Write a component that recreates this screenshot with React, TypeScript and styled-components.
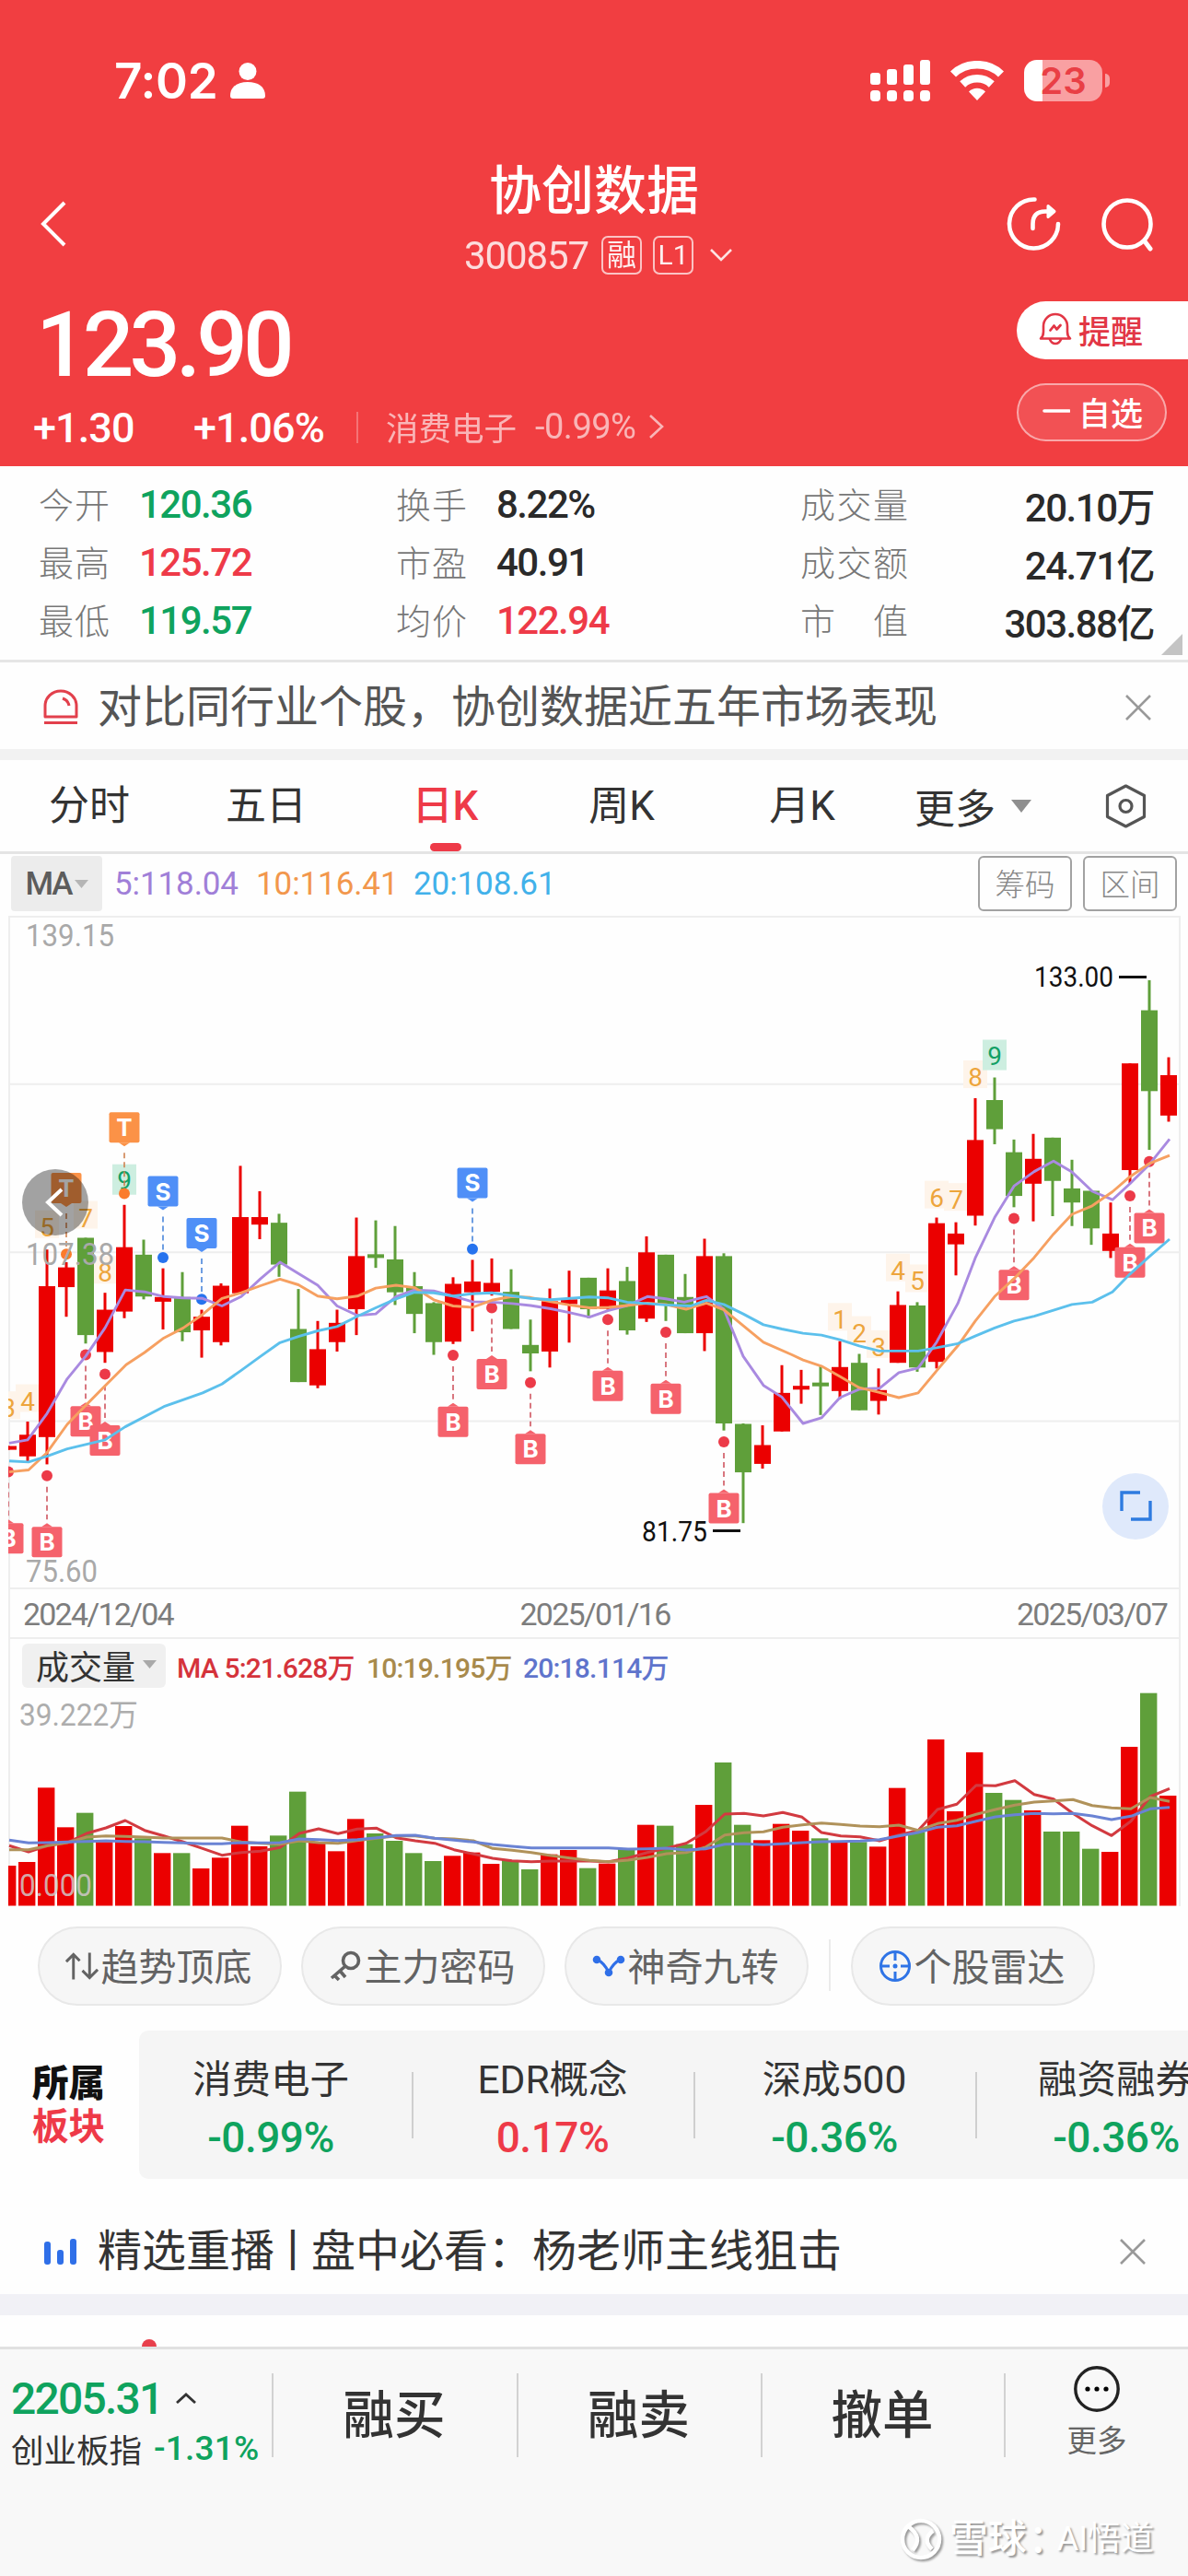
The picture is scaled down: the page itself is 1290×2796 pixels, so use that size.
import React from "react";
import styled, { createGlobalStyle, css } from "styled-components";

const GREEN = "#0fa35e";
const RED = "#ee3a48";
const UP = "#eb0000";
const DOWN = "#5f9f3a";
const FONT = `Roboto, "Noto Sans CJK SC", sans-serif`;

const Global = createGlobalStyle`
  * { box-sizing: border-box; }
  html, body { margin: 0; padding: 0; background: #fdfdfd; }
  body { font-family: ${FONT}; color: #2b2b2b; width: 1290px; overflow-x: hidden; }
  svg { display: block; flex: none; }
`;

const Page = styled.main`
  width: 1290px;
  height: 2796px;
  display: flex;
  flex-direction: column;
  overflow: hidden;
  background: #fefefe;
  white-space: nowrap;
`;

/* ---------- header ---------- */

const Header = styled.header`
  height: 506px;
  flex: none;
  background: #f13e41;
  color: #fff;
`;

const StatusBar = styled.div`
  height: 174px;
  display: flex;
  align-items: center;
  padding: 0 85px 0 124px;
`;

const Clock = styled.span`
  font: 600 53px/60px Inter, sans-serif;
  letter-spacing: -0.3px;
  padding-top: 2px;
  width: 126px;
`;

const StatusIcons = styled.div`
  margin-left: auto;
  display: flex;
  align-items: center;
  gap: 22px;
`;

const Battery = styled.div`
  display: flex;
  align-items: center;
  gap: 3px;
`;

const BatteryBody = styled.div`
  width: 85px;
  height: 45px;
  border-radius: 14px;
  background: linear-gradient(90deg, #fff 20px, #f9a0a2 20px);
  font: 600 40px/45px Inter, sans-serif;
  text-align: center;
  color: #e93f45;
`;

const BatteryNub = styled.i`
  width: 5px;
  height: 15px;
  border-radius: 0 5px 5px 0;
  background: #f9a0a2;
`;

const NavBar = styled.div`
  height: 138px;
  display: grid;
  grid-template-columns: 1fr 300px 1fr;
  align-items: center;
  padding: 0 36px 0 42px;
`;

const TitleBlock = styled.div`
  height: 138px;
  display: flex;
  flex-direction: column;
  align-items: center;
`;

const Title = styled.h1`
  margin: 0 0 3px -6px;
  font-weight: 500;
  font-size: 57px;
  line-height: 68px;
`;

const CodeRow = styled.div`
  display: flex;
  align-items: center;
  height: 64px;
  padding-left: 4px;
`;

const Code = styled.span`
  font-size: 42px;
  letter-spacing: -1.1px;
  opacity: 0.82;
  margin-right: 14px;
`;

const Tag = styled.span<{ $size: number }>`
  display: flex;
  align-items: center;
  justify-content: center;
  width: 44px;
  height: 42px;
  margin-right: 12px;
  border: 2px solid rgba(255, 255, 255, 0.75);
  border-radius: 7px;
  font-size: ${(p) => p.$size}px;
  line-height: 38px;
  opacity: 0.92;
`;

const NavActions = styled.div`
  justify-self: end;
  display: flex;
  gap: 42px;
`;

const Quote = styled.div`
  display: flex;
  justify-content: space-between;
`;

const Price = styled.div`
  padding-left: 39px;
  font-size: 98px;
  line-height: 126px;
  font-weight: 500;
  letter-spacing: -5px;
`;

const ChangeRow = styled.div`
  display: flex;
  align-items: center;
  height: 52px;
  padding-left: 36px;
`;

const Change = styled.span<{ $width: number }>`
  width: ${(p) => p.$width}px;
  font-size: 45px;
  font-weight: 500;
  letter-spacing: -0.9px;
`;

const Sector = styled.span`
  display: flex;
  align-items: center;
  height: 34px;
  border-left: 2px solid rgba(255, 255, 255, 0.45);
  padding: 0 0 3px 30px;
  font-size: 35.5px;
  opacity: 0.62;
  gap: 20px;
`;

const SectorChange = styled.span`
  font-size: 38px;
  letter-spacing: -0.5px;
`;

const QuoteActions = styled.div`
  width: 186px;
  padding-top: 15px;
  display: flex;
  flex-direction: column;
  gap: 26px;
`;

const actionBase = css`
  display: flex;
  align-items: center;
  height: 63px;
  padding: 0 0 3px 24px;
  gap: 7px;
  font-size: 35px;
  font-weight: 500;
`;

const AlertButton = styled.div`
  ${actionBase}
  background: #fff;
  color: #e23645;
  border-radius: 32px 0 0 32px;
`;

const WatchButton = styled.div`
  ${actionBase}
  width: 163px;
  gap: 9px;
  border: 2px solid rgba(255, 255, 255, 0.5);
  background: rgba(255, 255, 255, 0.1);
  border-radius: 32px;
`;

/* ---------- stats ---------- */

const Stats = styled.section`
  position: relative;
  flex: none;
  height: 213px;
  padding: 10px 37px 0 42px;
  border-bottom: 3px solid #e6e6e6;
  display: grid;
  grid-template-columns: 388px 439px 384px;
  grid-auto-rows: 63px;
`;

const Stat = styled.div`
  display: flex;
  align-items: center;
`;

const StatLabel = styled.span<{ $wide?: boolean }>`
  width: ${(p) => (p.$wide ? 117 : 77)}px;
  margin-right: ${(p) => (p.$wide ? 0 : 32)}px;
  padding-bottom: 4px;
  font-size: 38px;
  font-weight: 300;
  color: #777;
  text-align-last: justify;
`;

const StatValue = styled.span<{ $color?: string; $right?: boolean }>`
  color: ${(p) => p.$color || "#2a2a2a"};
  margin-left: ${(p) => (p.$right ? "auto" : "0")};
  font-size: 42px;
  font-weight: 500;
  letter-spacing: -1.5px;
`;

const Corner = styled.svg`
  position: absolute;
  right: 6px;
  bottom: 5px;
`;

/* ---------- notice rows ---------- */

const Notice = styled.section<{ $h: number; $top: number; $right: number; $color: string }>`
  flex: none;
  height: ${(p) => p.$h}px;
  padding: ${(p) => p.$top}px ${(p) => p.$right}px 0 46px;
  display: flex;
  align-items: center;
  gap: 20px;
  font-size: 48px;
  line-height: 64px;
  color: ${(p) => p.$color};
  & > svg:last-child { margin-left: auto; }
`;

const Bar = styled.span`
  margin: 0 -4px;
`;

const Band = styled.div<{ $h: number; $color: string }>`
  flex: none;
  height: ${(p) => p.$h}px;
  background: ${(p) => p.$color};
`;

/* ---------- tabs ---------- */

const Tabs = styled.nav`
  flex: none;
  height: 102px;
  display: flex;
  border-bottom: 3px solid #e4e4e4;
  font-size: 44px;
  color: #333;
`;

const Tab = styled.div<{ $w: number; $active?: boolean }>`
  width: ${(p) => p.$w}px;
  display: flex;
  flex-direction: column;
  align-items: center;
  line-height: 101px;
  color: ${(p) => (p.$active ? RED : "inherit")};
  font-weight: ${(p) => (p.$active ? 500 : 400)};
  &::after {
    content: "";
    display: ${(p) => (p.$active ? "block" : "none")};
    width: 34px;
    height: 9px;
    margin-top: -11px;
    border-radius: 5px;
    background: ${RED};
  }
`;

const MoreTab = styled.div`
  display: flex;
  align-items: center;
  gap: 17px;
  margin: 0 80px 0 18px;
`;

const Hex = styled.div`
  display: flex;
  align-items: center;
`;

/* ---------- moving-average row ---------- */

const MaRow = styled.div`
  flex: none;
  height: 67px;
  display: flex;
  align-items: center;
  padding: 0 12px 3px;
  font-size: 35px;
`;

const MaPicker = styled.div`
  width: 99px;
  height: 60px;
  display: flex;
  align-items: center;
  justify-content: center;
  gap: 3px;
  background: #ececec;
  border-radius: 4px;
  color: #5c5c5c;
  letter-spacing: -2px;
  font-weight: 500;
  margin-right: 13px;
`;

const MaValue = styled.span<{ $color: string; $w: number }>`
  width: ${(p) => p.$w}px;
  color: ${(p) => p.$color};
  letter-spacing: -0.1px;
`;

const OutlineButton = styled.div`
  width: 102px;
  height: 60px;
  border: 2px solid #a2a2a2;
  border-radius: 6px;
  display: flex;
  align-items: center;
  justify-content: center;
  padding-bottom: 3px;
  color: #888;
  font-size: 32.5px;
  font-weight: 300;
  margin-left: 12px;
  &:first-of-type { margin-left: 0; }
`;

const ButtonGroup = styled.div`
  margin-left: auto;
  display: flex;
`;

const DateRow = styled.div`
  flex: none;
  height: 54px;
  margin: 0 8px 0 9px;
  padding: 2px 13px 0 14px;
  display: flex;
  justify-content: space-between;
  align-items: center;
  border: 2px solid #eee;
  border-top: none;
  color: #7d7d7d;
  font-size: 34px;
  letter-spacing: -1.8px;
`;

/* ---------- volume ---------- */

const VolumeHead = styled.div`
  flex: none;
  height: 58px;
  display: flex;
  align-items: center;
  margin: 0 8px 0 9px;
  padding-left: 13px;
  border-left: 2px solid #eee;
  border-right: 2px solid #eee;
  font-size: 30px;
`;

const VolumePicker = styled.div`
  display: flex;
  align-items: center;
  gap: 8px;
  width: 156px;
  height: 48px;
  padding: 0 0 3px 15px;
  margin-right: 12px;
  background: #f0f0f0;
  border-radius: 6px;
  font-size: 36px;
  color: #333;
`;

const VolumeMa = styled.span<{ $color: string; $w: number }>`
  width: ${(p) => p.$w}px;
  color: ${(p) => p.$color};
  font-weight: 500;
  letter-spacing: -0.8px;
`;

/* ---------- tool pills ---------- */

const Pills = styled.div`
  flex: none;
  height: 134px;
  padding: 21px 0 0 41px;
  display: flex;
`;

const Pill = styled.div`
  width: 265px;
  height: 86px;
  margin-right: 21px;
  padding: 0 3px 4px 0;
  border: 2px solid #e8e8e8;
  border-radius: 43px;
  background: #f6f6f6;
  display: flex;
  align-items: center;
  justify-content: center;
  gap: 3px;
  font-size: 41px;
  color: #636363;
  & > svg { margin-top: 3px; }
`;

const PillDivider = styled.i`
  width: 2px;
  height: 56px;
  margin: 14px 22px 0 1px;
  background: #ebebeb;
`;

/* ---------- sectors ---------- */

const Boards = styled.section`
  flex: none;
  height: 161px;
  display: flex;
`;

const BoardsTitle = styled.div`
  width: 151px;
  padding: 34px 0 0 35px;
  font-size: 39.5px;
  line-height: 47px;
  font-weight: 900;
  color: #111;
  & > span { display: block; }
  & > span + span { color: ${RED}; font-weight: 700; }
`;

const BoardList = styled.div`
  flex: 1;
  display: flex;
  overflow: hidden;
  background: #f5f5f5;
  border-radius: 10px 0 0 10px;
`;

const Board = styled.div<{ $first?: boolean }>`
  position: relative;
  flex: none;
  width: ${(p) => (p.$first ? 298 : 306)}px;
  padding-top: 23px;
  text-align: center;
  font-size: 42.5px;
  line-height: 62px;
  color: #333;
  &::after {
    content: "";
    position: absolute;
    right: 0;
    top: 45px;
    width: 2px;
    height: 72px;
    background: #cfcfcf;
  }
`;

const BoardName = styled.div<{ $first?: boolean }>`
  margin-left: ${(p) => (p.$first ? -12 : -4)}px;
`;

const BoardChange = styled.div<{ $color: string; $first?: boolean }>`
  color: ${(p) => p.$color};
  margin-left: ${(p) => (p.$first ? -12 : -4)}px;
  font-size: 46px;
  font-weight: 500;
  letter-spacing: -0.5px;
`;

const Peek = styled.div`
  flex: none;
  height: 34px;
  padding: 26px 0 0 154px;
  overflow: hidden;
`;

const PeekDot = styled.div`
  width: 16px;
  height: 16px;
  border-radius: 50%;
  background: #e8404c;
`;

/* ---------- bottom bar ---------- */

const Bottom = styled.footer`
  flex: 1;
  border-top: 3px solid #e1e1e1;
  background: #f8f8f8;
`;

const BottomRow = styled.div`
  display: flex;
  padding-top: 26px;
`;

const IndexBox = styled.div`
  width: 295px;
  height: 91px;
  padding-left: 12px;
`;

const IndexLine = styled.div<{ $gap: number }>`
  display: flex;
  align-items: center;
  height: 54px;
  gap: ${(p) => p.$gap}px;
  font-size: 35.5px;
  color: #333;
`;

const IndexValue = styled.span<{ $size: number; $ls: number }>`
  color: ${GREEN};
  font-size: ${(p) => p.$size}px;
  font-weight: 500;
  letter-spacing: ${(p) => p.$ls}px;
`;

const BottomAction = styled.div<{ $w: number }>`
  width: ${(p) => p.$w}px;
  height: 91px;
  padding-right: 2px;
  border-left: 2px solid #d2d2d2;
  text-align: center;
  font-size: 55.5px;
  line-height: 94px;
  font-weight: 500;
  color: #333;
`;

const MoreAction = styled.div`
  flex: 1;
  height: 91px;
  border-left: 2px solid #d2d2d2;
  display: flex;
  flex-direction: column;
  align-items: center;
  font-size: 32.5px;
  line-height: 64px;
  color: #666;
  & > svg { margin-top: -8px; }
`;

const Watermark = styled.div`
  display: flex;
  align-items: center;
  justify-content: flex-end;
  margin-top: 62px;
  padding-right: 37px;
  color: #fff;
  font-size: 42px;
  line-height: 54px;
  font-weight: 500;
  text-shadow: 2px 2px 2px #999;
  gap: 8px;
`;

const WatermarkColon = styled.span`
  margin: 0 -19px 0 -6px;
`;

const WatermarkName = styled.span`
  font-size: 36px;
  font-weight: 400;
`;

/* ---------- chart data ---------- */

// Each candle: [rising, high, body top, body bottom, low] in plot units (1.96 units per pixel).
type Candle = [0 | 1, number, number, number, number];
const CANDLES: Candle[] = [
  [1, 1156, 1156, 1164, 1164], [1, 1104, 1132, 1178, 1190], [1, 738, 816, 1137, 1195], [1, 765, 776, 818, 881],
  [0, 713, 713, 920, 938], [1, 830, 866, 956, 979], [1, 643, 733, 870, 884], [0, 717, 749, 838, 844],
  [1, 778, 839, 849, 908], [0, 786, 839, 914, 933], [1, 866, 881, 910, 968], [1, 810, 815, 935, 942],
  [1, 560, 669, 831, 833], [1, 614, 669, 685, 716], [0, 662, 681, 770, 796], [0, 822, 907, 1020, 1020],
  [1, 890, 950, 1027, 1033], [1, 866, 894, 935, 955], [1, 670, 752, 865, 920], [0, 676, 748, 756, 777],
  [0, 688, 759, 829, 856], [0, 786, 816, 875, 916], [0, 850, 852, 935, 962], [1, 797, 811, 934, 939],
  [1, 760, 806, 829, 912], [1, 757, 809, 828, 836], [0, 780, 828, 907, 907], [0, 887, 941, 959, 997],
  [1, 821, 848, 955, 989], [1, 783, 844, 854, 936], [0, 798, 798, 865, 884], [1, 778, 825, 864, 866],
  [0, 775, 805, 910, 919], [1, 710, 744, 885, 892], [0, 749, 749, 857, 890], [0, 790, 839, 916, 916],
  [1, 715, 752, 916, 954], [0, 746, 752, 1108, 1123], [0, 1108, 1109, 1212, 1320], [1, 1112, 1154, 1194, 1204],
  [1, 984, 1043, 1125, 1125], [1, 994, 1028, 1036, 1066], [0, 985, 1021, 1029, 1090], [1, 933, 988, 1039, 1056],
  [0, 960, 979, 1080, 1080], [1, 991, 1037, 1060, 1089], [1, 827, 856, 979, 979], [0, 850, 857, 989, 998],
  [1, 670, 682, 977, 991], [1, 680, 704, 727, 793], [1, 416, 505, 666, 687], [0, 372, 420, 482, 514],
  [0, 504, 531, 624, 648], [1, 492, 545, 598, 678], [0, 500, 500, 592, 667], [0, 547, 608, 638, 688],
  [0, 613, 613, 693, 728], [1, 638, 704, 741, 756], [1, 342, 342, 569, 597], [0, 165, 229, 401, 526],
  [1, 329, 367, 453, 466],
];

type Pt = [number, number];
const MA5: Pt[] = [
  [10, 1150], [30, 1143], [51, 1087], [73, 1013], [93, 965], [114, 905], [136, 824], [157, 828], [178, 838], [199, 841],
  [220, 842], [241, 858], [262, 838], [283, 800], [304, 765], [324, 789], [345, 814], [366, 858], [388, 878], [408, 875],
  [430, 838], [450, 824], [471, 826], [492, 837], [513, 849], [534, 850], [556, 853], [576, 857], [598, 864], [618, 872],
  [640, 882], [660, 868], [681, 857], [703, 838], [723, 843], [743, 850], [767, 838], [786, 865], [807, 965], [829, 1027],
  [849, 1052], [872, 1108], [892, 1096], [912, 1053], [933, 1035], [955, 1033], [976, 1000], [997, 990], [1017, 935],
  [1040, 853], [1059, 756], [1080, 670], [1101, 603], [1123, 572], [1144, 550], [1164, 573], [1186, 614], [1208, 632],
  [1227, 598], [1248, 557], [1270, 503],
];
const MA10: Pt[] = [
  [10, 1211], [31, 1207], [51, 1170], [73, 1110], [93, 1070], [114, 1028], [137, 983], [157, 957], [178, 926], [199, 905],
  [220, 876], [241, 842], [262, 830], [283, 815], [304, 801], [324, 813], [345, 837], [366, 843], [388, 837], [408, 820],
  [430, 814], [450, 819], [471, 845], [492, 858], [513, 861], [534, 846], [556, 838], [576, 840], [598, 849], [618, 856],
  [640, 862], [661, 861], [681, 857], [703, 852], [723, 855], [745, 865], [767, 852], [786, 866], [807, 900], [829, 935],
  [860, 962], [872, 973], [892, 986], [912, 1008], [933, 1032], [955, 1042], [976, 1053], [997, 1043], [1017, 996],
  [1040, 943], [1059, 890], [1080, 838], [1101, 800], [1123, 755], [1144, 705], [1164, 663], [1186, 645], [1208, 615],
  [1227, 583], [1248, 555], [1270, 538],
];
const MA20: Pt[] = [
  [10, 1188], [31, 1190], [51, 1178], [73, 1162], [114, 1143], [136, 1115], [178, 1072], [220, 1043], [241, 1024],
  [262, 995], [283, 965], [304, 936], [324, 923], [345, 911], [366, 902], [388, 880], [408, 862], [430, 843], [450, 829],
  [471, 830], [492, 837], [513, 832], [534, 830], [576, 842], [598, 845], [640, 839], [661, 841], [681, 850], [723, 856],
  [750, 858], [767, 846], [786, 855], [807, 875], [829, 898], [849, 907], [872, 916], [892, 920], [912, 930], [933, 943],
  [955, 954], [976, 954], [997, 954], [1017, 947], [1040, 938], [1059, 922], [1080, 905], [1101, 890], [1123, 880],
  [1144, 867], [1164, 855], [1186, 850], [1208, 828], [1227, 790], [1248, 753], [1270, 716],
];

// [kind, candle index, dot height]
const SIGNALS: ["B" | "S" | "T", number, number][] = [
  ["B", 0, 1211], ["B", 2, 1219], ["B", 4, 962], ["B", 5, 1003], ["B", 23, 963], ["B", 25, 862], ["B", 27, 1021],
  ["B", 31, 887], ["B", 34, 914], ["B", 37, 1147], ["B", 52, 672], ["B", 58, 624], ["B", 59, 551],
  ["S", 8, 755], ["S", 10, 844], ["S", 24, 737], ["T", 3, 748], ["T", 6, 619],
];

// Nine-turn counts: [label, candle index, height]
const TURNS: [string, number, number][] = [
  ["3", 0, 1075], ["4", 1, 1060], ["5", 2, 690], ["7", 4, 670], ["8", 5, 787], ["9", 6, 590],
  ["1", 43, 887], ["2", 44, 915], ["3", 45, 945], ["4", 46, 782], ["5", 47, 805], ["6", 48, 627], ["7", 49, 632],
  ["8", 50, 371], ["9", 51, 325],
];

const VOLUME = [
  765, 753, 511, 640, 593, 688, 636, 676, 724, 724, 774, 739, 635, 702, 667, 524, 690, 718, 613, 660, 684, 724, 750, 733,
  722, 759, 747, 777, 728, 714, 773, 758, 710, 632, 635, 695, 567, 429, 632, 682, 629, 651, 676, 688, 688, 703, 512, 655,
  354, 588, 396, 528, 551, 585, 654, 654, 710, 720, 378, 203, 537,
];
const VOLUME_DOWN = new Set([4, 7, 9, 14, 15, 19, 20, 21, 22, 26, 27, 30, 32, 34, 35, 37, 38, 42, 44, 47, 51, 52, 54, 55, 56, 59]);
const VOL5 = [
  700, 720, 700, 690, 660, 642, 618, 650, 668, 688, 709, 731, 722, 718, 706, 660, 645, 661, 646, 643, 674, 684, 692, 713,
  727, 741, 749, 752, 750, 750, 750, 752, 740, 722, 708, 692, 655, 597, 595, 603, 592, 607, 657, 668, 671, 684, 665, 650,
  582, 565, 503, 505, 488, 533, 548, 595, 635, 667, 620, 540, 514,
];
const VOL10 = [
  713, 713, 700, 690, 672, 668, 670, 672, 675, 675, 675, 675, 688, 692, 695, 684, 690, 692, 683, 676, 668, 668, 676, 678,
  684, 709, 715, 722, 732, 740, 748, 752, 747, 738, 726, 722, 705, 665, 658, 655, 640, 632, 626, 631, 636, 638, 633, 650,
  628, 617, 598, 582, 568, 558, 554, 550, 569, 577, 580, 543, 556,
];
const VOL20 = [
  682, 691, 690, 688, 686, 684, 686, 687, 689, 691, 694, 694, 690, 691, 690, 678, 680, 683, 680, 674, 667, 666, 676, 682,
  688, 696, 702, 707, 707, 707, 707, 707, 711, 710, 708, 714, 710, 695, 694, 697, 694, 690, 687, 686, 685, 680, 668, 657,
  640, 635, 620, 606, 599, 595, 596, 595, 603, 615, 604, 580, 575,
];

const cx = (i: number) => 9 + i * 21;
const py = (u: number) => (u - 28) / 1.96;
const vy = (v: number) => v / 3 - 67;
const line = (pts: Pt[]) => pts.map(([x, u]) => `${x},${py(u).toFixed(1)}`).join(" ");
const volLine = (vals: number[]) => vals.map((v, i) => `${i ? cx(i) + 1 : 10},${vy(v).toFixed(1)}`).join(" ");

const SIGNAL_STYLE = {
  B: { fill: "#f5626c", dot: "#ec3a48", dash: "#cf5560" },
  S: { fill: "#4f8ff7", dot: "#2673ee", dash: "#4a86da" },
  T: { fill: "#fb9247", dot: "#fb7c2c", dash: "#cf8250" },
};

function Signal({ kind, x, y }: { kind: "B" | "S" | "T"; x: number; y: number }) {
  const s = SIGNAL_STYLE[kind];
  const below = kind === "B";
  const top = below ? y + 55.6 : y - 88.3;
  const tip = below ? top - 4 : top + 37;
  const edge = below ? top : top + 33;
  return (
    <g>
      <line x1={x} x2={x} y1={below ? y + 12 : tip + 7} y2={below ? tip - 4 : y - 8} stroke={s.dash} strokeWidth={1.6} strokeDasharray="6 4" />
      <circle cx={x} cy={y} r={6} fill={s.dot} />
      <rect x={x - 16.5} y={top} width={33} height={33} rx={2} fill={s.fill} />
      <path d={`M${x - 6} ${edge}L${x} ${tip}L${x + 6} ${edge}Z`} fill={s.fill} />
      <text x={x} y={top + 26} textAnchor="middle" fontFamily="Inter" fontWeight={700} fontSize={26} fill="#fff">{kind}</text>
    </g>
  );
}

function PriceChart() {
  return (
    <svg width="1290" height="731" viewBox="0 0 1290 731" fontFamily={FONT}>
      <defs><clipPath id="plot"><rect x="9" y="0" width="1273" height="731" /></clipPath></defs>
      <g stroke="#eeeeee" strokeWidth="2">
        {[28, 384, 742, 1101].map((u) => <line key={u} x1="9" x2="1282" y1={py(u) + 1} y2={py(u) + 1} />)}
        <line x1="9" x2="1282" y1="730" y2="730" />
        <line x1="10" x2="10" y1="0" y2="731" />
        <line x1="1281" x2="1281" y1="0" y2="731" />
      </g>
      <g clipPath="url(#plot)">
        {TURNS.map(([n, i, u]) => (
          <rect key={i} x={cx(i) - 13} y={py(u) - (n === "9" ? 17 : 18)} width={26} height={n === "9" ? 33 : 30} fill={n === "9" ? "#cdeee0" : "#fef4ea"} />
        ))}
        {CANDLES.map(([up, h, t, b, l], i) => (
          <g key={i} fill={up ? UP : DOWN}>
            <rect x={cx(i) - 1.5} y={py(h)} width={3} height={py(l) - py(h)} />
            <rect x={cx(i) - 9} y={py(t)} width={18} height={py(b) - py(t)} />
          </g>
        ))}
        {TURNS.map(([n, i, u]) => (
          <text key={i} x={cx(i)} y={py(u) + 10} textAnchor="middle" fontSize={28} fill={n === "9" ? "#12a065" : "#eda53c"}>{n}</text>
        ))}
        {SIGNALS.map(([k, i, u]) => <Signal key={k + i} kind={k} x={cx(i)} y={py(u)} />)}
        <g fill="none" strokeWidth="2.9" strokeLinejoin="round">
          <polyline points={line(MA5)} stroke="#a98ae0" />
          <polyline points={line(MA10)} stroke="#f6a061" />
          <polyline points={line(MA20)} stroke="#5cc0ec" />
        </g>
      </g>
      <g fontSize="33.5" fill="#a9a9a9">
        <text x="28" y="32.5" textLength="96" lengthAdjust="spacingAndGlyphs">139.15</text>
        <text x="28" y="379" textLength="96" lengthAdjust="spacingAndGlyphs">107.38</text>
        <text x="28" y="723" textLength="78" lengthAdjust="spacingAndGlyphs">75.60</text>
      </g>
      <g fontSize="30.5" fill="#111">
        <text x="1123" y="77" textLength="86" lengthAdjust="spacingAndGlyphs">133.00</text>
        <text x="697" y="679" textLength="71" lengthAdjust="spacingAndGlyphs">81.75</text>
        <rect x="1215" y="65" width="30" height="3" />
        <rect x="774" y="666" width="30" height="3" />
      </g>
      <circle cx="60" cy="311" r="36" fill="#000" opacity="0.36" />
      <path d="M67 297L52 311L67 325" fill="none" stroke="#fff" strokeWidth="4" />
      <circle cx="1233" cy="641" r="36" fill="#dfe9fb" />
      <path d="M1238 626H1218V646M1228 655H1249V635" fill="none" stroke="#2e7be0" strokeWidth="3.4" />
    </svg>
  );
}

function VolumeChart() {
  return (
    <svg width="1290" height="233" viewBox="0 0 1290 233" fontFamily={FONT}>
      <defs><clipPath id="vol"><rect x="9" y="0" width="1272" height="233" /></clipPath></defs>
      <path d="M10 0V232M1281 0V232" stroke="#eee" strokeWidth="2" />
      <g clipPath="url(#vol)">
        {VOLUME.map((v, i) => (
          <rect key={i} x={cx(i) - 10} y={vy(v)} width={18.4} height={231.5 - vy(v)} fill={VOLUME_DOWN.has(i) ? DOWN : UP} />
        ))}
        <g fill="none" strokeWidth="3" strokeLinejoin="round">
          <polyline points={volLine(VOL5)} stroke="#d23a40" />
          <polyline points={volLine(VOL10)} stroke="#b0925a" />
          <polyline points={volLine(VOL20)} stroke="#6a83d4" />
        </g>
      </g>
      <g fontSize="33.5" fill="#adadad">
        <text x="21" y="36" textLength="129" lengthAdjust="spacingAndGlyphs">39.222万</text>
        <text x="21" y="221" fill="#d0c8c8" fillOpacity="0.85" textLength="79" lengthAdjust="spacingAndGlyphs">0.000</text>
      </g>
    </svg>
  );
}

/* ---------- icons ---------- */

const Close = () => (
  <svg width="28" height="28" viewBox="0 0 28 28"><path d="M1 1L27 27M27 1L1 27" stroke="#999" strokeWidth="2.6" /></svg>
);

const Triangle = ({ w, h, color }: { w: number; h: number; color: string }) => (
  <svg width={w} height={h} viewBox="0 0 20 12" preserveAspectRatio="none"><path d="M0 0H20L10 12Z" fill={color} /></svg>
);

const STATS: [string, string, string?][] = [
  ["今开", "120.36", GREEN], ["换手", "8.22%"], ["成交量", "20.10万"],
  ["最高", "125.72", RED], ["市盈", "40.91"], ["成交额", "24.71亿"],
  ["最低", "119.57", GREEN], ["均价", "122.94", RED], ["市 值", "303.88亿"],
];

const BOARDS: [string, string, string][] = [
  ["消费电子", "-0.99%", GREEN],
  ["EDR概念", "0.17%", RED],
  ["深成500", "-0.36%", GREEN],
  ["融资融券", "-0.36%", GREEN],
];

export default function App() {
  return (
    <Page>
      <Global />
      <Header>
        <StatusBar>
          <Clock>7:02</Clock>
          <svg width="38" height="39" viewBox="0 0 38 39" fill="#fff">
            <circle cx="19" cy="9.5" r="9.5" />
            <path d="M0 36C0 26 8 21 19 21S38 26 38 36Q38 39 35 39H3Q0 39 0 36Z" />
          </svg>
          <StatusIcons>
            <svg width="65" height="45" viewBox="0 0 65 45" fill="#fff">
              <rect x="0" y="14" width="11" height="13" rx="3" /><rect x="18" y="10" width="11" height="17" rx="3" />
              <rect x="36" y="5" width="11" height="22" rx="3" /><rect x="54" y="0" width="11" height="27" rx="3" />
              <rect x="0" y="33" width="11" height="12" rx="4" /><rect x="18" y="33" width="11" height="12" rx="4" />
              <rect x="36" y="33" width="11" height="12" rx="4" /><rect x="54" y="33" width="11" height="12" rx="4" />
            </svg>
            <svg width="58" height="43" viewBox="0 0 58 43" fill="none" stroke="#fff" strokeWidth="8.6">
              <path d="M3 14.5C17 .8 41 .8 55 14.5" />
              <path d="M13.2 25.5C22 17.2 36 17.2 44.8 25.5" />
              <path d="M20 33.5C25 28.500 33 28.500 38 33.500L29 43Z" fill="#fff" stroke="none" />
            </svg>
            <Battery>
              <BatteryBody>23</BatteryBody>
              <BatteryNub />
            </Battery>
          </StatusIcons>
        </StatusBar>
        <NavBar>
          <svg width="30" height="50" viewBox="0 0 30 50"><path d="M28 2L5 25L28 48" fill="none" stroke="#fff" strokeWidth="4" /></svg>
          <TitleBlock>
            <Title>协创数据</Title>
            <CodeRow>
              <Code>300857</Code>
              <Tag $size={32}>融</Tag>
              <Tag $size={30}>L1</Tag>
              <svg width="26" height="16" viewBox="0 0 26 16" style={{ marginLeft: 5 }}><path d="M2 2L13 13L24 2" fill="none" stroke="#fff" strokeWidth="2.6" opacity=".85" /></svg>
            </CodeRow>
          </TitleBlock>
          <NavActions>
            <svg width="60" height="60" viewBox="0 0 60 60" fill="none" stroke="#fff" strokeWidth="4.6" strokeLinecap="round">
              <path d="M31.500 3.500A26.500 26.500 0 1 0 57 30" />
              <path d="M29.500 35V30Q29.500 16.500 43 16.500H50" /><path d="M46 10.500L53 16.500L46 22.500Z" fill="#fff" strokeWidth="3" strokeLinejoin="round" />
            </svg>
            <svg width="60" height="60" viewBox="0 0 60 60" fill="none" stroke="#fff" strokeWidth="4.6" strokeLinecap="round">
              <circle cx="30" cy="30" r="25.5" /><path d="M49 49L55 57" strokeWidth="5" />
            </svg>
          </NavActions>
        </NavBar>
        <Quote>
          <div>
            <Price>123.90</Price>
            <ChangeRow>
              <Change $width={174}>+1.30</Change>
              <Change $width={177}>+1.06%</Change>
              <Sector>
                消费电子
                <SectorChange>-0.99%</SectorChange>
                <svg width="18" height="28" viewBox="0 0 18 28" style={{ marginLeft: -6 }}><path d="M2 2L15 14L2 26" fill="none" stroke="#fff" strokeWidth="2.6" /></svg>
              </Sector>
            </ChangeRow>
          </div>
          <QuoteActions>
            <AlertButton>
              <svg width="36" height="36" viewBox="0 0 36 36" fill="none" stroke="#e23645" strokeWidth="2.6" strokeLinejoin="round" strokeLinecap="round">
                <path d="M2 28.500Q5 26 5 21V15A13 13 0 0 1 31 15V21Q31 26 34 28.500Z" />
                <path d="M12 29.500Q14 34 18 34T24 29.500" /><path d="M12.500 19.500L16.500 14.500L19.500 18.500L23.500 14" strokeWidth="2.8" />
              </svg>
              提醒
            </AlertButton>
            <WatchButton>
              <svg width="32" height="6" viewBox="0 0 32 6"><path d="M4 3H31" stroke="#fff" strokeWidth="3.6" strokeLinecap="round" /></svg>
              自选
            </WatchButton>
          </QuoteActions>
        </Quote>
      </Header>

      <Stats>
        {STATS.map(([label, value, color], i) => (
          <Stat key={label}>
            <StatLabel $wide={i % 3 === 2}>{label}</StatLabel>
            <StatValue $color={color} $right={i % 3 === 2}>{value}</StatValue>
          </Stat>
        ))}
        <Corner width="23" height="23" viewBox="0 0 23 23"><path d="M23 0V23H0Z" fill="#c4c4c4" /></Corner>
      </Stats>

      <Notice $h={94} $top={4} $right={40} $color="#555">
        <svg width="40" height="40" viewBox="0 0 40 40" fill="none" stroke="#e2404c" strokeWidth="3">
          <path d="M3 30V18A17 16 0 0 1 37 18V30Z" strokeLinejoin="round" /><path d="M2 36.500H38" /><path d="M22 10Q28 12 29 18" />
        </svg>
        对比同行业个股，协创数据近五年市场表现
        <Close />
      </Notice>
      <Band $h={12} $color="#f2f2f2" />

      <Tabs>
        <Tab $w={194}>分时</Tab>
        <Tab $w={190}>五日</Tab>
        <Tab $w={199} $active>日K</Tab>
        <Tab $w={184}>周K</Tab>
        <Tab $w={208}>月K</Tab>
        <MoreTab>更多<Triangle w={22} h={14} color="#8f8f8f" /></MoreTab>
        <Hex>
          <svg width="45" height="48" viewBox="0 0 45 48" fill="none" stroke="#555" strokeWidth="3.2">
            <path d="M22.500 2L42.500 12.500V35.500L22.500 46L2.500 35.500V12.500Z" strokeLinejoin="round" /><circle cx="22.5" cy="24" r="6.5" />
          </svg>
        </Hex>
      </Tabs>

      <MaRow>
        <MaPicker>MA<Triangle w={15} h={9} color="#b5b5b5" /></MaPicker>
        <MaValue $color="#a07fd8" $w={154}>5:118.04</MaValue>
        <MaValue $color="#f2974c" $w={171}>10:116.41</MaValue>
        <MaValue $color="#41b1ea" $w={160}>20:108.61</MaValue>
        <ButtonGroup>
          <OutlineButton>筹码</OutlineButton>
          <OutlineButton>区间</OutlineButton>
        </ButtonGroup>
      </MaRow>

      <PriceChart />
      <DateRow><span>2024/12/04</span><span>2025/01/16</span><span>2025/03/07</span></DateRow>

      <VolumeHead>
        <VolumePicker>成交量<Triangle w={15} h={9} color="#a9a9a9" /></VolumePicker>
        <VolumeMa $color="#d5333b" $w={206}>MA 5:21.628万</VolumeMa>
        <VolumeMa $color="#a88a4c" $w={170}>10:19.195万</VolumeMa>
        <VolumeMa $color="#5f74cc" $w={170}>20:18.114万</VolumeMa>
      </VolumeHead>
      <VolumeChart />

      <Pills>
        <Pill>
          <svg width="36" height="32" viewBox="0 0 37 32" fill="none" stroke="#636363" strokeWidth="3"><path d="M9 31V3M1 11L9 3L16 10M27 1V28M19 21L27 29L36 20" /></svg>
          趋势顶底
        </Pill>
        <Pill>
          <svg width="36" height="34" viewBox="0 0 36 34" fill="none" stroke="#636363" strokeWidth="3.6"><circle cx="24" cy="11" r="8.5" /><path d="M18 17L3 30M12 22L18 29M6 27L11 32" /></svg>
          主力密码
        </Pill>
        <Pill>
          <svg width="36" height="26" viewBox="0 0 36 26" fill="#2f6fe8" stroke="#2f6fe8" strokeWidth="3"><path d="M5 6Q13 9 18 20Q23 9 31 6" fill="none" /><circle cx="5" cy="6" r="2.8" /><circle cx="31" cy="6" r="2.8" /><circle cx="18" cy="20" r="2.8" /></svg>
          神奇九转
        </Pill>
        <PillDivider />
        <Pill>
          <svg width="36" height="36" viewBox="0 0 36 36" fill="none" stroke="#2f74e6" strokeWidth="3"><circle cx="18" cy="18" r="15.5" /><path d="M18 2V12M18 24V34M2 18H12M24 18H34" /><circle cx="18" cy="18" r="2.5" fill="#2f74e6" stroke="none" /></svg>
          个股雷达
        </Pill>
      </Pills>

      <Boards>
        <BoardsTitle><span>所属</span><span>板块</span></BoardsTitle>
        <BoardList>
          {BOARDS.map(([name, change, color], i) => (
            <Board key={name} $first={i === 0}>
              <BoardName $first={i === 0}>{name}</BoardName>
              <BoardChange $first={i === 0} $color={color}>{change}</BoardChange>
            </Board>
          ))}
        </BoardList>
      </Boards>

      <Notice $h={125} $top={33} $right={46} $color="#333">
        <svg width="40" height="30" viewBox="0 0 40 30" fill="#2f6fe8"><rect x="2" y="4" width="7" height="25" rx="3" /><rect x="16" y="13" width="7" height="16" rx="3" /><rect x="30" y="1" width="7" height="28" rx="3" /></svg>
        <span>精选重播<Bar>丨</Bar>盘中必看：杨老师主线狙击</span>
        <Close />
      </Notice>
      <Band $h={23} $color="#f1f1f6" />
      <Peek><PeekDot /></Peek>

      <Bottom>
        <BottomRow>
          <IndexBox>
            <IndexLine $gap={15}>
              <IndexValue $size={48} $ls={-1.8}>2205.31</IndexValue>
              <svg width="22" height="12" viewBox="0 0 22 12"><path d="M1 11L11 2L21 11" fill="none" stroke="#333" strokeWidth="2.8" /></svg>
            </IndexLine>
            <IndexLine $gap={13}>创业板指<IndexValue $size={37} $ls={0.2}>-1.31%</IndexValue></IndexLine>
          </IndexBox>
          <BottomAction $w={266}>融买</BottomAction>
          <BottomAction $w={265}>融卖</BottomAction>
          <BottomAction $w={264}>撤单</BottomAction>
          <MoreAction>
            <svg width="50" height="50" viewBox="0 0 50 50"><circle cx="25" cy="25" r="23.2" fill="none" stroke="#222" strokeWidth="3.4" /><circle cx="15" cy="25" r="2.6" /><circle cx="25" cy="25" r="2.6" /><circle cx="35" cy="25" r="2.6" /></svg>
            更多
          </MoreAction>
        </BottomRow>
        <Watermark>
          <svg width="46" height="48" viewBox="0 0 46 48" fill="none" stroke="#fff" strokeWidth="4.5" style={{ filter: "drop-shadow(2px 2px 1px #999)" }}>
            <circle cx="23" cy="24" r="20" /><path d="M9 10Q26 22 14 36M36 15Q24 24 35 35" />
          </svg>
          雪球
          <WatermarkColon>：</WatermarkColon>
          <WatermarkName>AI悟道</WatermarkName>
        </Watermark>
      </Bottom>
    </Page>
  );
}
